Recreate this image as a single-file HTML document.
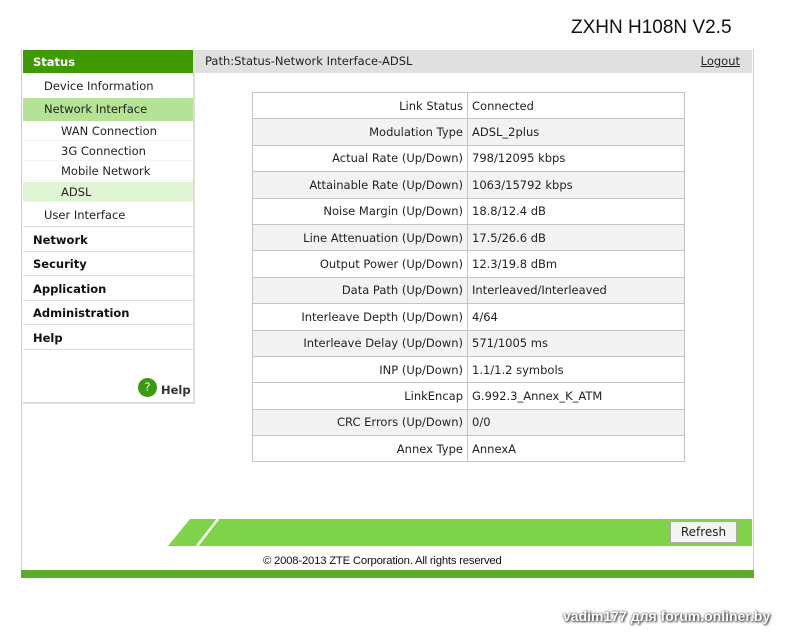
<!DOCTYPE html>
<html><head><style>
body{margin:0;width:800px;height:641px;background:#fff;position:relative;font-family:"DejaVu Sans",Verdana,sans-serif;font-size:11.5px;color:#222;overflow:hidden}
.a{position:absolute}
.title{left:571px;top:17px;font:19px "Liberation Sans",sans-serif;color:#111}
.frame{left:21px;top:49px;width:731px;height:521px;border-left:1px solid #ccc;border-right:1px solid #ccc}
.side{left:23px;top:50px;width:170px;height:352px;border-right:2px solid #ddd;border-bottom:2px solid #ddd}
.side div{position:absolute;left:0;width:170px}
.hd{background:#3f9a00;color:#fff;font-weight:bold;height:23px;line-height:25px;padding-left:10px;box-sizing:border-box}
.m{font-weight:bold;color:#111;padding-left:10px;box-sizing:border-box;height:24px;line-height:24px;border-bottom:1px solid #ddd}
.s{padding-left:21px;box-sizing:border-box;height:22px;line-height:22px}
.ss{padding-left:38px;box-sizing:border-box;height:20px;line-height:20px;border-bottom:1px solid #f2f2f2}
.path{left:194px;top:50px;width:558px;height:23px;background:#e0e0e0;line-height:22px}
table{position:absolute;left:252px;top:92px;width:433px;border-collapse:collapse}
tr{height:26.4px}
td{border:1px solid #c4c4c4;padding:0 4px;white-space:nowrap}
td:first-child{text-align:right;width:206px}
tr.g td{background:#f2f2f2}
</style></head><body>
<div class="a title">ZXHN H108N V2.5</div>
<div class="a frame"></div>
<div class="a side">
<div class="hd" style="top:0">Status</div>
<div class="s" style="top:25px">Device Information</div>
<div class="s" style="top:48px;height:23px;background:#b5e396">Network Interface</div>
<div class="ss" style="top:71px">WAN Connection</div>
<div class="ss" style="top:91px">3G Connection</div>
<div class="ss" style="top:111px">Mobile Network</div>
<div class="ss" style="top:132px;background:#e0f5d4">ADSL</div>
<div class="s" style="top:154px;border-bottom:1px solid #ddd;height:23px">User Interface</div>
<div class="m" style="top:178px">Network</div>
<div class="m" style="top:202px">Security</div>
<div class="m" style="top:227px">Application</div>
<div class="m" style="top:251px">Administration</div>
<div class="m" style="top:276px">Help</div>
<div style="top:328px;left:115px;width:60px;font-weight:bold;color:#333"><span style="display:inline-block;width:19px;height:19px;border-radius:50%;background:#3a9a10;color:#fff;text-align:center;line-height:19px;font-weight:normal;vertical-align:3px">?</span> Help</div>
</div>
<div class="a path"><span style="margin-left:11px">Path:Status-Network Interface-ADSL</span><span style="position:absolute;right:12px;text-decoration:underline">Logout</span></div>
<table>
<tr><td>Link Status</td><td>Connected</td></tr>
<tr class="g"><td>Modulation Type</td><td>ADSL_2plus</td></tr>
<tr><td>Actual Rate (Up/Down)</td><td>798/12095 kbps</td></tr>
<tr class="g"><td>Attainable Rate (Up/Down)</td><td>1063/15792 kbps</td></tr>
<tr><td>Noise Margin (Up/Down)</td><td>18.8/12.4 dB</td></tr>
<tr class="g"><td>Line Attenuation (Up/Down)</td><td>17.5/26.6 dB</td></tr>
<tr><td>Output Power (Up/Down)</td><td>12.3/19.8 dBm</td></tr>
<tr class="g"><td>Data Path (Up/Down)</td><td>Interleaved/Interleaved</td></tr>
<tr><td>Interleave Depth (Up/Down)</td><td>4/64</td></tr>
<tr class="g"><td>Interleave Delay (Up/Down)</td><td>571/1005 ms</td></tr>
<tr><td>INP (Up/Down)</td><td>1.1/1.2 symbols</td></tr>
<tr><td>LinkEncap</td><td>G.992.3_Annex_K_ATM</td></tr>
<tr class="g"><td>CRC Errors (Up/Down)</td><td>0/0</td></tr>
<tr><td>Annex Type</td><td>AnnexA</td></tr>
</table>
<svg class="a" style="left:168px;top:519px" width="584" height="27"><polygon points="22,0 584,0 584,27 0,27" fill="#7ed348"/><line x1="50" y1="0" x2="29" y2="27" stroke="#fff" stroke-width="2.5"/></svg>
<div class="a" style="left:670px;top:521px;width:67px;height:22px;background:#f4f4f4;border:1px solid #aaa;box-sizing:border-box;text-align:center;line-height:20px;font-size:12px">Refresh</div>
<div class="a" style="left:263px;top:555px;font:11.3px 'Liberation Sans',sans-serif;color:#111;letter-spacing:-0.2px">© 2008-2013 ZTE Corporation. All rights reserved</div>
<div class="a" style="left:563px;top:608px;font:bold 14px 'Liberation Sans',sans-serif;color:#fff;text-shadow:0 0 2px #333,1px 1px 2px #333">vadim177 для forum.onliner.by</div>
<div class="a" style="left:21px;top:570px;width:733px;height:8px;background:#5aad2a"></div>
</body></html>
